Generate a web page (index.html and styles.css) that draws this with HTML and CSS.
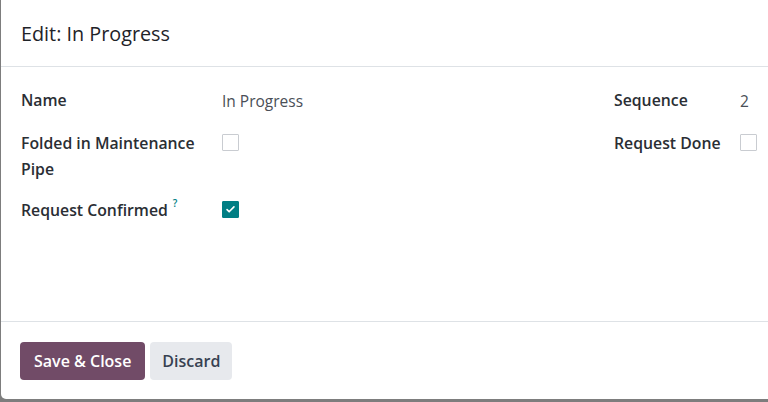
FILE: index.html
```html
<!DOCTYPE html>
<html lang="en">
<head>
  <meta charset="UTF-8" />
  <title>Edit: In Progress</title>
  <link rel="stylesheet" href="styles.css">
</head>
<body>

  <div class="modal">
    <header class="modal-header">
      <h4 class="modal-title">Edit: In Progress</h4>
    </header>

    <div class="modal-body">
      <div class="form-group">
        <div class="field-row">
          <label class="field-label">Name</label>
          <div class="field-value field-input">In Progress</div>
        </div>
        <div class="field-row">
          <label class="field-label">Folded in Maintenance Pipe</label>
          <div class="field-value"><span class="checkbox"></span></div>
        </div>
        <div class="field-row">
          <label class="field-label">Request Confirmed<sup class="help">?</sup></label>
          <div class="field-value">
            <span class="checkbox checked">
              <svg viewBox="0 0 16 16" width="11" height="11"><path d="M3 8.3l3 3 7-7" fill="none" stroke="#fff" stroke-width="2.4" stroke-linecap="round" stroke-linejoin="round"/></svg>
            </span>
          </div>
        </div>
      </div>

      <div class="form-group form-group-right">
        <div class="field-row">
          <label class="field-label">Sequence</label>
          <div class="field-value field-input">2</div>
        </div>
        <div class="field-row">
          <label class="field-label">Request Done</label>
          <div class="field-value"><span class="checkbox"></span></div>
        </div>
      </div>
    </div>

    <footer class="modal-footer">
      <button class="btn btn-primary">Save &amp; Close</button>
      <button class="btn btn-secondary">Discard</button>
    </footer>
  </div>

</body>
</html>
```

FILE: styles.css
```css
html, body {
  margin: 0;
  padding: 0;
  height: 100%;
  overflow: hidden;
}
body {
  background: #7d7d7d;
  font-family: "Open Sans", "Noto Sans", sans-serif;
  color: #1f2328;
}
.modal {
  margin-left: 1px;
  width: 790px;
  height: 399px;
  background: #fff;
  border-radius: 0 0 0 5px;
  display: flex;
  flex-direction: column;
}
.modal-header {
  height: 66px;
  border-bottom: 1px solid #dee2e6;
  display: flex;
  align-items: center;
  padding-left: 20px;
}
.modal-title {
  margin: 0;
  font-size: 19.8px;
  font-weight: 400;
  color: #1f2328;
}
.modal-body {
  flex: 1;
  display: flex;
  justify-content: space-between;
  padding: 20px 0 0 20px;
  width: 736px;
}
.form-group {
  display: flex;
  flex-direction: column;
  gap: 15px;
}
.field-row {
  display: grid;
  grid-template-columns: 201px 1fr;
  align-items: start;
}
.form-group-right .field-row {
  grid-template-columns: 126px auto;
}
.field-label {
  font-size: 15.8px;
  font-weight: 600;
  line-height: 26px;
  max-width: 190px;
  color: #2a2e34;
}
.help {
  color: #017e84;
  font-size: 10px;
  font-weight: 600;
  margin-left: 5px;
  vertical-align: 9px;
  line-height: 0;
}
.field-value {
  font-size: 15.5px;
  line-height: 26px;
  color: #4a4f57;
  padding-top: 4px;
}
.field-input {
  padding-top: 1px;
  height: 28px;
  box-sizing: border-box;
}
.checkbox {
  display: flex;
  align-items: center;
  justify-content: center;
  width: 17px;
  height: 17px;
  box-sizing: border-box;
  border: 1px solid #c9ccd1;
  border-radius: 1px;
  background: #fff;
}
.checkbox.checked {
  background: #017e84;
  border-color: #017e84;
}
.modal-footer {
  border-top: 1px solid #dee2e6;
  padding: 20px 0 19px 19px;
  display: flex;
  gap: 5px;
}
.btn {
  height: 38px;
  padding: 0 14px;
  border: none;
  border-radius: 4px;
  font-family: "Open Sans", "Noto Sans", sans-serif;
  font-size: 16px;
  font-weight: 600;
}
.btn-primary {
  background: #714b67;
  color: #fff;
}
.btn-secondary {
  padding: 0 12px;
  background: #e7e9ed;
  color: #374151;
}
```
